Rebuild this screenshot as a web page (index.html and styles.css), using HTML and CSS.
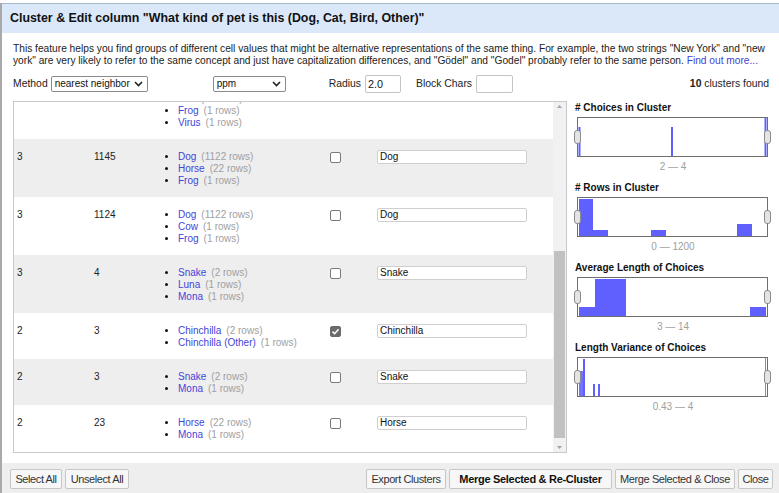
FILE: index.html
```html
<!DOCTYPE html>
<html>
<head>
<meta charset="utf-8">
<link rel="stylesheet" href="styles.css">
</head>
<body>
<div class="peek"><span>Tree records</span></div>
<div class="dialog">
  <div class="titlebar">Cluster &amp; Edit column "What kind of pet is this (Dog, Cat, Bird, Other)"</div>
  <div class="content">
    <p class="desc">This feature helps you find groups of different cell values that might be alternative representations of the same thing. For example, the two strings "New York" and "new<br>york" are very likely to refer to the same concept and just have capitalization differences, and "Gödel" and "Godel" probably refer to the same person. <a class="link">Find out more...</a></p>
    <div class="controls">
      <span class="lbl">Method</span>
      <span class="sel sel-method"><span class="sel-text">nearest neighbor</span><svg class="chev" width="9" height="6" viewBox="0 0 9 6"><path d="M1 1 L4.5 4.5 L8 1" fill="none" stroke="#222" stroke-width="1.6"/></svg></span>
      <span class="sel sel-ppm"><span class="sel-text">ppm</span><svg class="chev" width="9" height="6" viewBox="0 0 9 6"><path d="M1 1 L4.5 4.5 L8 1" fill="none" stroke="#222" stroke-width="1.6"/></svg></span>
      <span class="lbl lbl-radius">Radius</span>
      <span class="txt txt-radius">2.0</span>
      <span class="lbl lbl-block">Block Chars</span>
      <span class="txt txt-block"></span>
      <span class="found"><b>10</b> clusters found</span>
    </div>
    <div class="main">
      <div class="tablebox">
        <div class="viewport">
          <table class="clusters">
            <colgroup><col class="c1"><col class="c2"><col class="c3"><col class="c4"><col class="c5"></colgroup>
            <tr class="w partial">
              <td></td><td></td>
              <td><ul><li><a>Bird</a><i>(12 rows)</i></li><li><a>Frog</a><i>(1 rows)</i></li><li><a>Virus</a><i>(1 rows)</i></li></ul></td>
              <td></td><td></td>
            </tr>
            <tr class="g">
              <td>3</td><td>1145</td>
              <td><ul><li><a>Dog</a><i>(1122 rows)</i></li><li><a>Horse</a><i>(22 rows)</i></li><li><a>Frog</a><i>(1 rows)</i></li></ul></td>
              <td class="cb"><span class="box"></span></td><td class="in"><span class="field">Dog</span></td>
            </tr>
            <tr class="w">
              <td>3</td><td>1124</td>
              <td><ul><li><a>Dog</a><i>(1122 rows)</i></li><li><a>Cow</a><i>(1 rows)</i></li><li><a>Frog</a><i>(1 rows)</i></li></ul></td>
              <td class="cb"><span class="box"></span></td><td class="in"><span class="field">Dog</span></td>
            </tr>
            <tr class="g">
              <td>3</td><td>4</td>
              <td><ul><li><a>Snake</a><i>(2 rows)</i></li><li><a>Luna</a><i>(1 rows)</i></li><li><a>Mona</a><i>(1 rows)</i></li></ul></td>
              <td class="cb"><span class="box"></span></td><td class="in"><span class="field">Snake</span></td>
            </tr>
            <tr class="w">
              <td>2</td><td>3</td>
              <td><ul><li><a>Chinchilla</a><i>(2 rows)</i></li><li><a>Chinchilla (Other)</a><i>(1 rows)</i></li></ul></td>
              <td class="cb"><span class="box on"><svg width="11" height="11" viewBox="0 0 11 11"><path d="M2.5 5.6 L4.6 7.7 L8.6 3.2" fill="none" stroke="#fff" stroke-width="1.5"/></svg></span></td><td class="in"><span class="field">Chinchilla</span></td>
            </tr>
            <tr class="g">
              <td>2</td><td>3</td>
              <td><ul><li><a>Snake</a><i>(2 rows)</i></li><li><a>Mona</a><i>(1 rows)</i></li></ul></td>
              <td class="cb"><span class="box"></span></td><td class="in"><span class="field">Snake</span></td>
            </tr>
            <tr class="w">
              <td>2</td><td>23</td>
              <td><ul><li><a>Horse</a><i>(22 rows)</i></li><li><a>Mona</a><i>(1 rows)</i></li></ul></td>
              <td class="cb"><span class="box"></span></td><td class="in"><span class="field">Horse</span></td>
            </tr>
          </table>
        </div>
        <div class="scrollbar">
          <svg class="arrow" width="13" height="9" viewBox="0 0 13 9"><path d="M4 6 L6.5 3 L9 6 Z" fill="#a3a3a3"/></svg>
          <div class="track"><div class="thumb"></div></div>
          <svg class="arrow" width="13" height="9" viewBox="0 0 13 9"><path d="M4 3 L6.5 6 L9 3 Z" fill="#a3a3a3"/></svg>
        </div>
      </div>
      <div class="side">
        <div class="facet">
          <div class="fh"># Choices in Cluster</div>
          <div class="hist">
            <svg width="189" height="38" viewBox="0 0 189 38"><rect x="0.5" y="9" width="2" height="29" fill="#6060ff"/><rect x="93" y="9" width="2" height="29" fill="#6060ff"/><rect x="186.5" y="0" width="2" height="38" fill="#6060ff"/></svg>
            <span class="handle hl"></span><span class="handle hr"></span>
          </div>
          <div class="range">2 — 4</div>
        </div>
        <div class="facet">
          <div class="fh"># Rows in Cluster</div>
          <div class="hist">
            <svg width="189" height="38" viewBox="0 0 189 38"><rect x="1" y="1" width="14" height="37" fill="#6060ff"/><rect x="15" y="32" width="15" height="6" fill="#6060ff"/><rect x="73" y="32" width="15" height="6" fill="#6060ff"/><rect x="159" y="26" width="15" height="12" fill="#6060ff"/></svg>
            <span class="handle hl"></span><span class="handle hr"></span>
          </div>
          <div class="range">0 — 1200</div>
        </div>
        <div class="facet">
          <div class="fh">Average Length of Choices</div>
          <div class="hist">
            <svg width="189" height="38" viewBox="0 0 189 38"><rect x="1" y="29" width="16" height="9" fill="#6060ff"/><rect x="17" y="1" width="31" height="37" fill="#6060ff"/><rect x="172" y="29" width="16" height="9" fill="#6060ff"/></svg>
            <span class="handle hl"></span><span class="handle hr"></span>
          </div>
          <div class="range">3 — 14</div>
        </div>
        <div class="facet">
          <div class="fh">Length Variance of Choices</div>
          <div class="hist">
            <svg width="189" height="38" viewBox="0 0 189 38"><rect x="1" y="13" width="5" height="25" fill="#7373ff"/><rect x="5" y="1" width="2" height="37" fill="#6060ff"/><rect x="15" y="26" width="2" height="12" fill="#6060ff"/><rect x="20" y="26" width="2" height="12" fill="#6060ff"/><rect x="187" y="0" width="1" height="38" fill="#8080ff"/></svg>
            <span class="handle hl"></span><span class="handle hr"></span>
          </div>
          <div class="range">0.43 — 4</div>
        </div>
      </div>
    </div>
  </div>
  <div class="footer">
    <div class="grp">
      <span class="btn w-sel">Select All</span>
      <span class="btn w-unsel">Unselect All</span>
    </div>
    <div class="grp">
      <span class="btn w-export">Export Clusters</span>
      <span class="btn strong w-recluster">Merge Selected &amp; Re-Cluster</span>
      <span class="btn w-mclose">Merge Selected &amp; Close</span>
      <span class="btn w-close">Close</span>
    </div>
  </div>
</div>
</body>
</html>
```

FILE: styles.css
```css
* { box-sizing: border-box; }
html, body {
  margin: 0;
  padding: 0;
  width: 779px;
  height: 493px;
  overflow: hidden;
  background: #fff;
  font-family: "Liberation Sans", Arial, sans-serif;
  font-size: 10px;
  color: #222;
}
.peek {
  height: 3px;
  overflow: hidden;
  background: #fff;
  padding-left: 38px;
}
.peek span {
  display: block;
  font-size: 18px;
  line-height: 18px;
  margin-top: -15px;
  color: #333;
}
.dialog {
  height: 490px;
  border-left: 2px solid #a9a9a9;
  display: flex;
  flex-direction: column;
}
.titlebar {
  height: 30px;
  border-top: 1px solid #a7b7cc;
  background: #dbe8f9;
  font-weight: bold;
  font-size: 12.4px;
  line-height: 28px;
  padding-left: 8px;
  color: #111;
}
.content {
  flex: 1;
  padding: 10px 10px 0 11px;
  display: flex;
  flex-direction: column;
}
.desc {
  margin: 0;
  font-size: 10.2px;
  line-height: 12px;
  color: #222;
  white-space: nowrap;
}
.link { color: #3f3fd6; }
.controls {
  margin-top: 8px;
  height: 18px;
  display: flex;
  align-items: center;
}
.lbl { color: #222; font-size: 10.4px; line-height: 12px; }
.sel {
  display: flex;
  align-items: center;
  justify-content: space-between;
  height: 16px;
  border: 1px solid #8a8a8a;
  border-radius: 2px;
  background: #fff;
  padding: 0 4px 0 3px;
  font-size: 10px;
  line-height: 12px;
  color: #111;
  white-space: nowrap;
}
.chev { display: block; flex: none; }
.sel-method { width: 97px; margin-left: 3px; }
.sel-ppm { width: 73px; margin-left: 65px; }
.lbl-radius { margin-left: 43px; }
.txt {
  height: 18px;
  border: 1px solid #c4c4c4;
  border-radius: 2px;
  background: #fff;
  padding-left: 2px;
  line-height: 16px;
  font-size: 10.8px;
  color: #111;
}
.txt-radius { width: 36px; margin-left: 4px; }
.lbl-block { margin-left: 15px; }
.txt-block { width: 37px; margin-left: 4px; }
.found { margin-left: auto; font-size: 10.4px; line-height: 12px; }
.found b { font-weight: bold; }
.main {
  margin-top: 8px;
  display: flex;
  gap: 8px;
}
.tablebox {
  width: 554px;
  height: 352px;
  border: 1px solid #c9c9c9;
  display: flex;
  background: #fff;
}
.viewport {
  flex: 1;
  overflow: hidden;
}
.clusters {
  margin-top: -21px;
  width: 539px;
  border-collapse: collapse;
  table-layout: fixed;
}
.c1 { width: 80px; }
.c2 { width: 71px; }
.c3 { width: 160px; }
.c4 { width: 47px; }
.c5 { width: 181px; }
.clusters td {
  vertical-align: top;
  padding: 12px 0 10px 0;
  line-height: 12px;
  color: #222;
}
.clusters td:first-child { padding-left: 3px; }
tr.g td { background: #eeeeee; }
tr.w td { background: #fff; }
.clusters ul {
  margin: 0;
  padding: 0 0 0 13px;
  list-style: disc;
}
.clusters li { white-space: nowrap; color: #111; }
.clusters li::marker { font-size: 10px; }
.clusters a { color: #4444d8; }
.clusters i { font-style: normal; color: #a0a0a0; margin-left: 5px; }
.clusters td.cb { padding-left: 5px; padding-top: 13px; }
.box {
  display: block;
  width: 11px;
  height: 11px;
  border: 1px solid #7a7a7a;
  border-radius: 2px;
  background: #fff;
}
.box.on { background: #6b6b6b; border-color: #6b6b6b; }
.box.on svg { display: block; margin: -1px 0 0 -1px; }
.clusters td.in { padding-left: 5px; padding-top: 11px; }
.field {
  display: block;
  width: 150px;
  height: 14px;
  border: 1px solid #cfcfcf;
  border-radius: 2px;
  background: #fff;
  padding-left: 2px;
  line-height: 12px;
  color: #111;
}
.scrollbar {
  width: 13px;
  background: #f1f1f1;
  display: flex;
  flex-direction: column;
}
.arrow { display: block; flex: none; }
.track { flex: 1; padding: 0 1px; display: flex; flex-direction: column; }
.thumb {
  margin-top: 140px;
  height: 187px;
  background: #c1c1c1;
}
.side {
  width: 196px;
  padding-top: 1px;
}
.facet { height: 80px; }
.fh {
  font-weight: bold;
  line-height: 12px;
  color: #111;
}
.hist {
  position: relative;
  margin: 3px 0 0 2px;
  width: 191px;
  height: 40px;
  border: 1px solid #6e6e6e;
  background: #fff;
}
.hist svg { display: block; }
.handle {
  position: absolute;
  top: 12px;
  width: 7px;
  height: 14px;
  border: 1px solid #8c8c8c;
  border-radius: 3px;
  background: #e4e4e4;
}
.handle.hl { left: -4px; }
.handle.hr { right: -4px; }
.range {
  text-align: center;
  color: #a0a0a0;
  line-height: 12px;
  margin-top: 4px;
  padding-left: 2px;
}
.footer {
  margin-top: 10px;
  height: 30px;
  background: #eeeeee;
  display: flex;
  justify-content: space-between;
  padding: 6px 6px 0 8px;
}
.grp { display: flex; gap: 3px; }
.btn {
  height: 20px;
  border: 1px solid #c6c6c6;
  border-radius: 2px;
  background: #f7f7f7;
  padding: 0;
  text-align: center;
  white-space: nowrap;
  line-height: 18px;
  font-size: 11px;
  letter-spacing: -0.4px;
  color: #333;
}
.btn.strong { font-weight: bold; color: #111; letter-spacing: -0.3px; }
.w-sel { width: 52px; }
.w-unsel { width: 64px; }
.w-export { width: 80px; }
.w-recluster { width: 163px; }
.w-mclose { width: 120px; }
.w-close { width: 35px; }
```
